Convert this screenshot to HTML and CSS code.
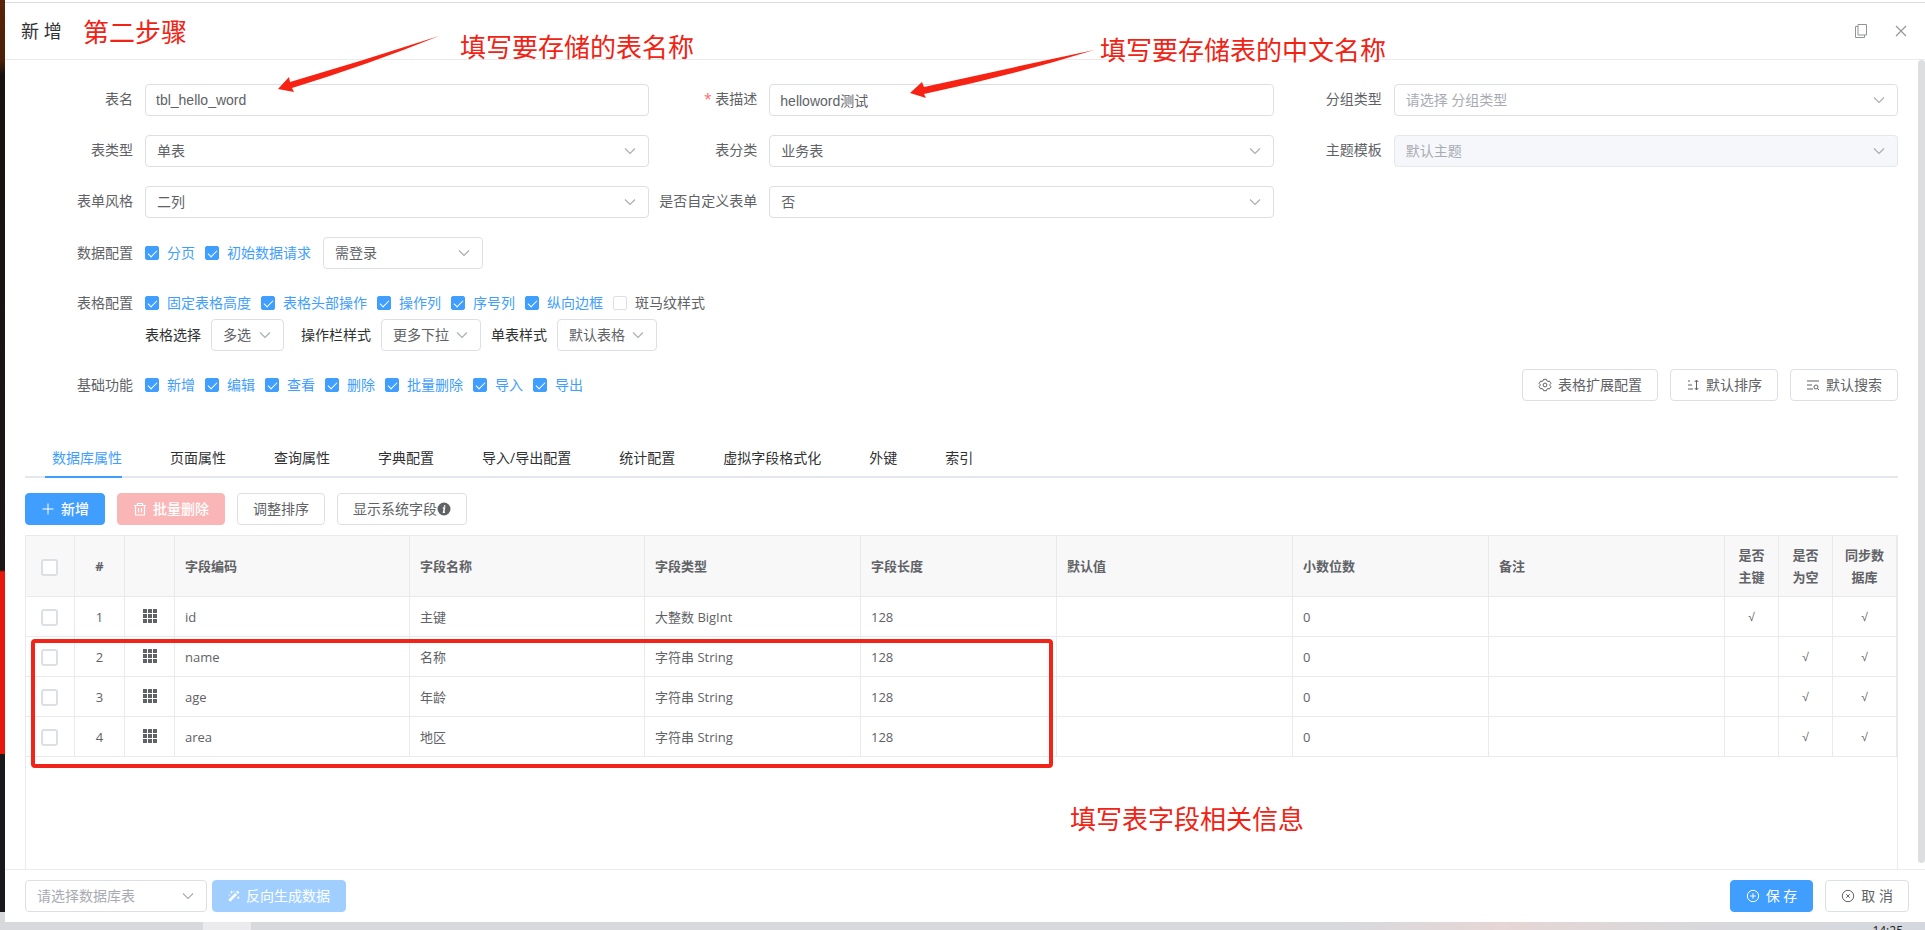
FILE: index.html
```html
<!DOCTYPE html>
<html lang="zh-CN">
<head>
<meta charset="utf-8">
<title>新增</title>
<link rel="stylesheet" href="styles.css">
</head>
<body>
<svg class="sprite" aria-hidden="true">
  <symbol id="down" viewBox="0 0 14 14"><path d="M2 4.5l5 5 5-5" fill="none" stroke="currentColor" stroke-width="1.1"/></symbol>
  <symbol id="copy" viewBox="0 0 14 14"><path d="M4 .5h8.500v10.500H4zM4 2.500H1.500v11H10.500V11" fill="none" stroke="currentColor"/></symbol>
  <symbol id="close" viewBox="0 0 14 14"><path d="M2 2l10 10M12 2L2 12" fill="none" stroke="currentColor" stroke-width="1.1"/></symbol>
  <symbol id="gear" viewBox="0 0 14 14"><path d="M5.600 1.300h2.800l.5 1.500 1.100.6 1.500-.3 1.400 2.400-1 1.100v.8l1 1.100-1.400 2.400-1.500-.3-1.100.6-.5 1.500H5.600l-.5-1.500-1.100-.6-1.500.3-1.400-2.400 1-1.100v-.8l-1-1.100 1.400-2.400 1.500.3 1.100-.6z" fill="none" stroke="currentColor" stroke-linejoin="round"/><circle cx="7" cy="7" r="1.900" fill="none" stroke="currentColor"/></symbol>
  <symbol id="sort" viewBox="0 0 14 14"><path d="M2 3h2M2 7h4M2 11h5M10.500 2.500v9M8.700 4l1.800-2 1.800 2M8.700 10l1.800 2 1.800-2" fill="none" stroke="currentColor"/></symbol>
  <symbol id="find" viewBox="0 0 14 14"><path d="M1 3h12M1 7h5M1 11h6M11.500 10.500l1.500 1.500" fill="none" stroke="currentColor"/><circle cx="10" cy="9" r="2" fill="none" stroke="currentColor"/></symbol>
  <symbol id="plus" viewBox="0 0 14 14"><path d="M7 1.500v11M1.500 7h11" fill="none" stroke="currentColor"/></symbol>
  <symbol id="trash" viewBox="0 0 14 14"><path d="M1 3.500h12M4.500 3.500v-2h5v2M2.500 3.500v9.500h9V3.500M5.500 6v4.500M8.500 6v4.500" fill="none" stroke="currentColor" stroke-width="1.200"/></symbol>
  <symbol id="info" viewBox="0 0 14 14"><circle cx="7" cy="7" r="6.500" fill="currentColor"/><path d="M5.800 6h1.700l-.9 4.300h1.300M7.600 3.200v1.500" fill="none" stroke="#fff" stroke-width="1.500"/></symbol>
  <symbol id="grid" viewBox="0 0 14 14"><path d="M0 0h4v4H0zM5 0h4v4H5zM10 0h4v4h-4zM0 5h4v4H0zM5 5h4v4H5zM10 5h4v4h-4zM0 10h4v4H0zM5 10h4v4H5zM10 10h4v4h-4z" fill="currentColor"/></symbol>
  <symbol id="wand" viewBox="0 0 14 14"><path d="M1.500 12.500l8-8" stroke="currentColor" stroke-width="3.200"/><path d="M10.400 3.600l1.800-1.800" stroke="currentColor" stroke-width="3.200"/><path d="M4 1v3M2.500 2.500h3M7 1v1.600M12 7.500v3M10.500 9h3M1.500 5.200v1.600" stroke="currentColor"/></symbol>
  <symbol id="circle-plus" viewBox="0 0 14 14"><circle cx="7" cy="7" r="5.700" fill="none" stroke="currentColor"/><path d="M7 4.200v5.600M4.200 7h5.600" stroke="currentColor"/></symbol>
  <symbol id="circle-close" viewBox="0 0 14 14"><circle cx="7" cy="7" r="5.700" fill="none" stroke="currentColor"/><path d="M5.200 5.200l3.600 3.600M8.800 5.200L5.200 8.800" stroke="currentColor"/></symbol>
</svg>

<div class="desktop">
  <main class="dialog">
    <header class="dialog-head">
      <h1 class="title">新 增</h1>
      <div class="head-tools">
        <button class="icon-btn" aria-label="最大化"><svg class="icon"><use href="#copy"/></svg></button>
        <button class="icon-btn" aria-label="关闭"><svg class="icon"><use href="#close"/></svg></button>
      </div>
    </header>

    <section class="content">
      <div class="form-grid">
        <div class="field"><label class="label" for="name">表名</label><input class="text" id="name" value="tbl_hello_word"></div>
        <div class="field"><label class="label required" for="desc">表描述</label><input class="text" id="desc" value="helloword测试"></div>
        <div class="field"><label class="label" for="group">分组类型</label><div class="select"><select id="group" class="empty"><option>请选择 分组类型</option></select><svg class="arrow"><use href="#down"/></svg></div></div>
        <div class="field"><label class="label" for="type">表类型</label><div class="select"><select id="type"><option>单表</option></select><svg class="arrow"><use href="#down"/></svg></div></div>
        <div class="field"><label class="label" for="class">表分类</label><div class="select"><select id="class"><option>业务表</option></select><svg class="arrow"><use href="#down"/></svg></div></div>
        <div class="field"><label class="label" for="theme">主题模板</label><div class="select"><select id="theme" disabled><option>默认主题</option></select><svg class="arrow"><use href="#down"/></svg></div></div>
        <div class="field"><label class="label" for="style">表单风格</label><div class="select"><select id="style"><option>二列</option></select><svg class="arrow"><use href="#down"/></svg></div></div>
        <div class="field"><label class="label" for="custom">是否自定义表单</label><div class="select"><select id="custom"><option>否</option></select><svg class="arrow"><use href="#down"/></svg></div></div>
      </div>

      <div class="config">
        <span class="label">数据配置</span>
        <div class="line">
          <label class="check"><input type="checkbox" checked>分页</label>
          <label class="check"><input type="checkbox" checked>初始数据请求</label>
          <div class="select wide"><select aria-label="登录"><option>需登录</option></select><svg class="arrow"><use href="#down"/></svg></div>
        </div>
      </div>

      <div class="config">
        <span class="label">表格配置</span>
        <div class="lines">
          <div class="line">
            <label class="check"><input type="checkbox" checked>固定表格高度</label>
            <label class="check"><input type="checkbox" checked>表格头部操作</label>
            <label class="check"><input type="checkbox" checked>操作列</label>
            <label class="check"><input type="checkbox" checked>序号列</label>
            <label class="check"><input type="checkbox" checked>纵向边框</label>
            <label class="check"><input type="checkbox">斑马纹样式</label>
          </div>
          <div class="line">
            <label class="inline-label" for="pick">表格选择</label>
            <div class="select narrow"><select id="pick"><option>多选</option></select><svg class="arrow"><use href="#down"/></svg></div>
            <label class="inline-label" for="ops">操作栏样式</label>
            <div class="select medium"><select id="ops"><option>更多下拉</option></select><svg class="arrow"><use href="#down"/></svg></div>
            <label class="inline-label" for="look">单表样式</label>
            <div class="select medium"><select id="look"><option>默认表格</option></select><svg class="arrow"><use href="#down"/></svg></div>
          </div>
        </div>
      </div>

      <div class="config">
        <span class="label">基础功能</span>
        <div class="line">
          <label class="check"><input type="checkbox" checked>新增</label>
          <label class="check"><input type="checkbox" checked>编辑</label>
          <label class="check"><input type="checkbox" checked>查看</label>
          <label class="check"><input type="checkbox" checked>删除</label>
          <label class="check"><input type="checkbox" checked>批量删除</label>
          <label class="check"><input type="checkbox" checked>导入</label>
          <label class="check"><input type="checkbox" checked>导出</label>
        </div>
        <div class="buttons push">
          <button class="btn"><svg class="icon"><use href="#gear"/></svg>表格扩展配置</button>
          <button class="btn"><svg class="icon"><use href="#sort"/></svg>默认排序</button>
          <button class="btn"><svg class="icon"><use href="#find"/></svg>默认搜索</button>
        </div>
      </div>

      <nav class="tabs">
        <a class="tab active" href="#db">数据库属性</a>
        <a class="tab" href="#page">页面属性</a>
        <a class="tab" href="#query">查询属性</a>
        <a class="tab" href="#dict">字典配置</a>
        <a class="tab" href="#io">导入/导出配置</a>
        <a class="tab" href="#stat">统计配置</a>
        <a class="tab" href="#virtual">虚拟字段格式化</a>
        <a class="tab" href="#foreign">外键</a>
        <a class="tab" href="#index">索引</a>
      </nav>

      <div class="buttons">
        <button class="btn primary strong"><svg class="icon"><use href="#plus"/></svg>新增</button>
        <button class="btn danger strong" disabled><svg class="icon"><use href="#trash"/></svg>批量删除</button>
        <button class="btn">调整排序</button>
        <button class="btn tight">显示系统字段<svg class="icon"><use href="#info"/></svg></button>
      </div>

      <div class="table-box">
        <table class="table">
          <colgroup><col class="c49"><col class="c50"><col class="c50"><col class="c235"><col class="c235"><col class="c216"><col class="c196"><col class="c236"><col class="c196"><col class="c236"><col class="c54"><col class="c54"><col class="c64"></colgroup>
          <thead>
            <tr><th class="mid"><input type="checkbox" class="box" aria-label="全选"></th><th class="mid">#</th><th></th><th>字段编码</th><th>字段名称</th><th>字段类型</th><th>字段长度</th><th>默认值</th><th>小数位数</th><th>备注</th><th class="mid">是否主键</th><th class="mid">是否为空</th><th class="mid">同步数据库</th></tr>
          </thead>
          <tbody>
            <tr><td class="mid"><input type="checkbox" class="box" aria-label="选择 1"></td><td class="mid">1</td><td class="mid"><svg class="icon"><use href="#grid"/></svg></td><td>id</td><td>主键</td><td>大整数 BigInt</td><td>128</td><td></td><td>0</td><td></td><td class="mid tick">√</td><td></td><td class="mid tick">√</td></tr>
            <tr><td class="mid"><input type="checkbox" class="box" aria-label="选择 2"></td><td class="mid">2</td><td class="mid"><svg class="icon"><use href="#grid"/></svg></td><td>name</td><td>名称</td><td>字符串 String</td><td>128</td><td></td><td>0</td><td></td><td></td><td class="mid tick">√</td><td class="mid tick">√</td></tr>
            <tr><td class="mid"><input type="checkbox" class="box" aria-label="选择 3"></td><td class="mid">3</td><td class="mid"><svg class="icon"><use href="#grid"/></svg></td><td>age</td><td>年龄</td><td>字符串 String</td><td>128</td><td></td><td>0</td><td></td><td></td><td class="mid tick">√</td><td class="mid tick">√</td></tr>
            <tr><td class="mid"><input type="checkbox" class="box" aria-label="选择 4"></td><td class="mid">4</td><td class="mid"><svg class="icon"><use href="#grid"/></svg></td><td>area</td><td>地区</td><td>字符串 String</td><td>128</td><td></td><td>0</td><td></td><td></td><td class="mid tick">√</td><td class="mid tick">√</td></tr>
          </tbody>
        </table>
      </div>
      <div class="scroll-thumb"></div>
    </section>

    <footer class="dialog-foot">
      <div class="select source"><select class="empty" aria-label="数据库表"><option>请选择数据库表</option></select><svg class="arrow"><use href="#down"/></svg></div>
      <button class="btn primary faded" disabled><svg class="icon small"><use href="#wand"/></svg>反向生成数据</button>
      <div class="buttons push">
        <button class="btn primary"><svg class="icon"><use href="#circle-plus"/></svg>保 存</button>
        <button class="btn"><svg class="icon"><use href="#circle-close"/></svg>取 消</button>
      </div>
    </footer>
  </main>
  <div class="taskbar"><span class="task"></span><span class="clock">14:25</span></div>

  <div class="note note-step">第二步骤</div>
  <div class="note note-name">填写要存储的表名称</div>
  <div class="note note-desc">填写要存储表的中文名称</div>
  <div class="note note-fields">填写表字段相关信息</div>
  <div class="mark"></div>
  <svg class="arrows" aria-hidden="true">
    <path d="M278 89L289 77 290 82Q365 60 439 36Q370 64 292 88L294 92z"/>
    <path d="M910 93L922 82 924 87Q1010 68 1094 50Q1010 76 924 94L926 98z"/>
  </svg>
</div>
</body>
</html>
```
FILE: styles.css
```css
* { box-sizing: border-box; }

body {
  margin: 0;
  color: #606266;
  font: 14px/22px "Open Sans", "Noto Sans CJK SC", sans-serif;
}

button, select, input { font: inherit; color: inherit; margin: 0; }

.sprite { position: absolute; width: 0; height: 0; }

.desktop {
  position: relative;
  display: flex;
  flex-direction: column;
  height: 100vh;
  padding: 2px 0 0 5px;
  overflow: hidden;
  background: #fff linear-gradient(#5a2408 0, #4a2008 60px, #17120f 75px, #1c1618 570px, #e6170b 572px, #e6170b 754px, #19181c 754px, #19181c 912px, #d8d9dd 912px) 0 0 / 5px 100% no-repeat;
}

.dialog {
  display: flex;
  flex: 1;
  flex-direction: column;
  min-height: 0;
  background: #fff;
  border-top: 1px solid #dcdcdc;
}

.dialog-head {
  display: flex;
  align-items: center;
  justify-content: space-between;
  height: 57px;
  padding: 0 14px 0 16px;
  border-bottom: 1px solid #ebebeb;
}

.title { margin: 0; color: #303133; font-size: 18px; font-weight: 400; }
.head-tools { display: flex; gap: 20px; }
.icon-btn { display: grid; place-items: center; width: 20px; height: 20px; padding: 0; border: 0; background: none; color: #909399; }
.icon { flex: none; width: 14px; height: 14px; }
.icon.small { width: 12px; height: 12px; }

.content {
  position: relative;
  display: flex;
  flex: 1;
  flex-direction: column;
  min-height: 0;
  padding: 24px 27px 0 20px;
  overflow: hidden;
}

.form-grid { display: grid; grid-template-columns: repeat(3, 1fr); row-gap: 19px; margin-bottom: 19px; }
.field, .config { display: flex; }
.config { margin-bottom: 18px; }
.label { flex: none; width: 120px; padding-right: 12px; line-height: 32px; text-align: right; white-space: nowrap; }
.field .label { line-height: 29px; }
.required::before { content: "* "; color: #f56c6c; }

.text, .select select {
  width: 100%;
  height: 32px;
  padding: 0 11px;
  border: 1px solid #dcdfe6;
  border-radius: 4px;
  outline: 0;
  background: #fff;
}
.text { padding: 0 10px; font-family: "Liberation Sans", "Noto Sans CJK SC", sans-serif; }
.select { position: relative; flex: 1; }
.select select { appearance: none; opacity: 1; }
.select .empty, .select select:disabled { color: #a8abb2; }
.select select:disabled { background: #f5f7fa; border-color: #e4e7ed; }
.arrow { position: absolute; top: 9px; right: 12px; width: 14px; height: 14px; color: #a8abb2; pointer-events: none; }
.wide { flex: 0 0 160px; }
.narrow { flex: 0 0 73px; margin-right: 7px; }
.medium { flex: 0 0 100px; }
.source { flex: 0 0 182px; }

.line { display: flex; align-items: center; gap: 10px; height: 32px; }
.inline-label { color: #303133; }
.check { display: flex; align-items: center; gap: 8px; }
.check:has(:checked) { color: #409eff; }
.check + .wide { margin-left: 2px; }
.check input {
  display: grid;
  place-items: center;
  appearance: none;
  width: 14px;
  height: 14px;
  border: 1px solid #dcdfe6;
  border-radius: 2px;
}
.check input:checked { border-color: #409eff; background: #409eff; }
.check input:checked::before {
  content: "";
  width: 4px;
  height: 8px;
  margin-bottom: 2px;
  border: solid #fff;
  border-width: 0 1px 1px 0;
  transform: rotate(45deg);
}

.buttons { display: flex; gap: 12px; }
.push { margin-left: auto; }
.btn {
  display: flex;
  align-items: center;
  justify-content: center;
  gap: 6px;
  height: 32px;
  padding: 0 15px;
  border: 1px solid #dcdfe6;
  border-radius: 4px;
  background: #fff;
  white-space: nowrap;
}
.btn.tight { gap: 0; }
.btn.strong { font-weight: 500; }
.btn.primary { border-color: #409eff; background: #409eff; color: #fff; }
.btn.danger { border-color: #fab6b6; background: #fab6b6; color: #fff; }
.btn.faded { border-color: #a0cfff; background: #a0cfff; }

.tabs { display: flex; gap: 48px; margin: 21px 0 15px; padding-left: 27px; border-bottom: 2px solid #e4e7ed; }
.tab { position: relative; color: #303133; line-height: 36px; text-decoration: none; }
.tab.active { color: #409eff; }
.tab.active::after { content: ""; position: absolute; right: 0; bottom: -2px; left: -7px; height: 2px; background: #409eff; }

.table-box { flex: 1; min-height: 0; margin-top: 10px; border: 1px solid #e8eaec; border-bottom: 0; }
.table { width: 100%; border-spacing: 0; table-layout: fixed; font-size: 13px; }
.table th, .table td { height: 40px; padding: 0 10px; border-right: 1px solid #e8eaec; border-bottom: 1px solid #e8eaec; text-align: left; }
.table th { height: 61px; background: #f8f8f9; font-weight: 700; line-height: 22px; }
.table .mid { text-align: center; }
.table .icon { display: block; margin: 0 auto 2px; }
.table .tick { font-family: "Liberation Sans", sans-serif; font-size: 12px; }
.c49 { width: 49px; }
.c50 { width: 50px; }
.c54 { width: 54px; }
.c64 { width: 64px; }
.c196 { width: 196px; }
.c216 { width: 216px; }
.c235 { width: 235px; }
.c236 { width: 236px; }
.box { display: block; appearance: none; width: 17px; height: 17px; margin: 2px auto 0; border: 2px solid #dcdfe6; border-radius: 3px; background: #fff; }
.table .mid:has(.box) { padding: 0 16px 0 14px; }

.scroll-thumb { position: absolute; top: 0; right: 0; bottom: 6px; width: 7px; border-radius: 4px; background: #dddee0; }

.dialog-foot { display: flex; gap: 5px; padding: 10px 16px 10px 20px; border-top: 1px solid #ebebeb; }

.taskbar {
  display: flex;
  justify-content: space-between;
  height: 8px;
  margin-left: -5px;
  padding: 0 22px 0 203px;
  overflow: hidden;
  background: linear-gradient(90deg, #d8d9dd 70%, #e6d6d5 78%, #d8d8db 88%, #d4d8de);
}
.task { width: 48px; background: #ebebed; }
.clock { color: #222; font-size: 12px; line-height: 18px; }

.note { position: absolute; color: #f02314; font-size: 26px; line-height: 32px; white-space: nowrap; }
.note-step { top: 16px; left: 83px; }
.note-name { top: 31px; left: 460px; }
.note-desc { top: 34px; left: 1100px; }
.note-fields { top: 803px; left: 1070px; }
.mark { position: absolute; top: 639px; left: 31px; width: 1022px; height: 129px; border: 4px solid #f02419; border-radius: 4px; }
.arrows { position: absolute; top: 0; left: 0; width: 1200px; height: 110px; fill: #f62314; pointer-events: none; }
```
